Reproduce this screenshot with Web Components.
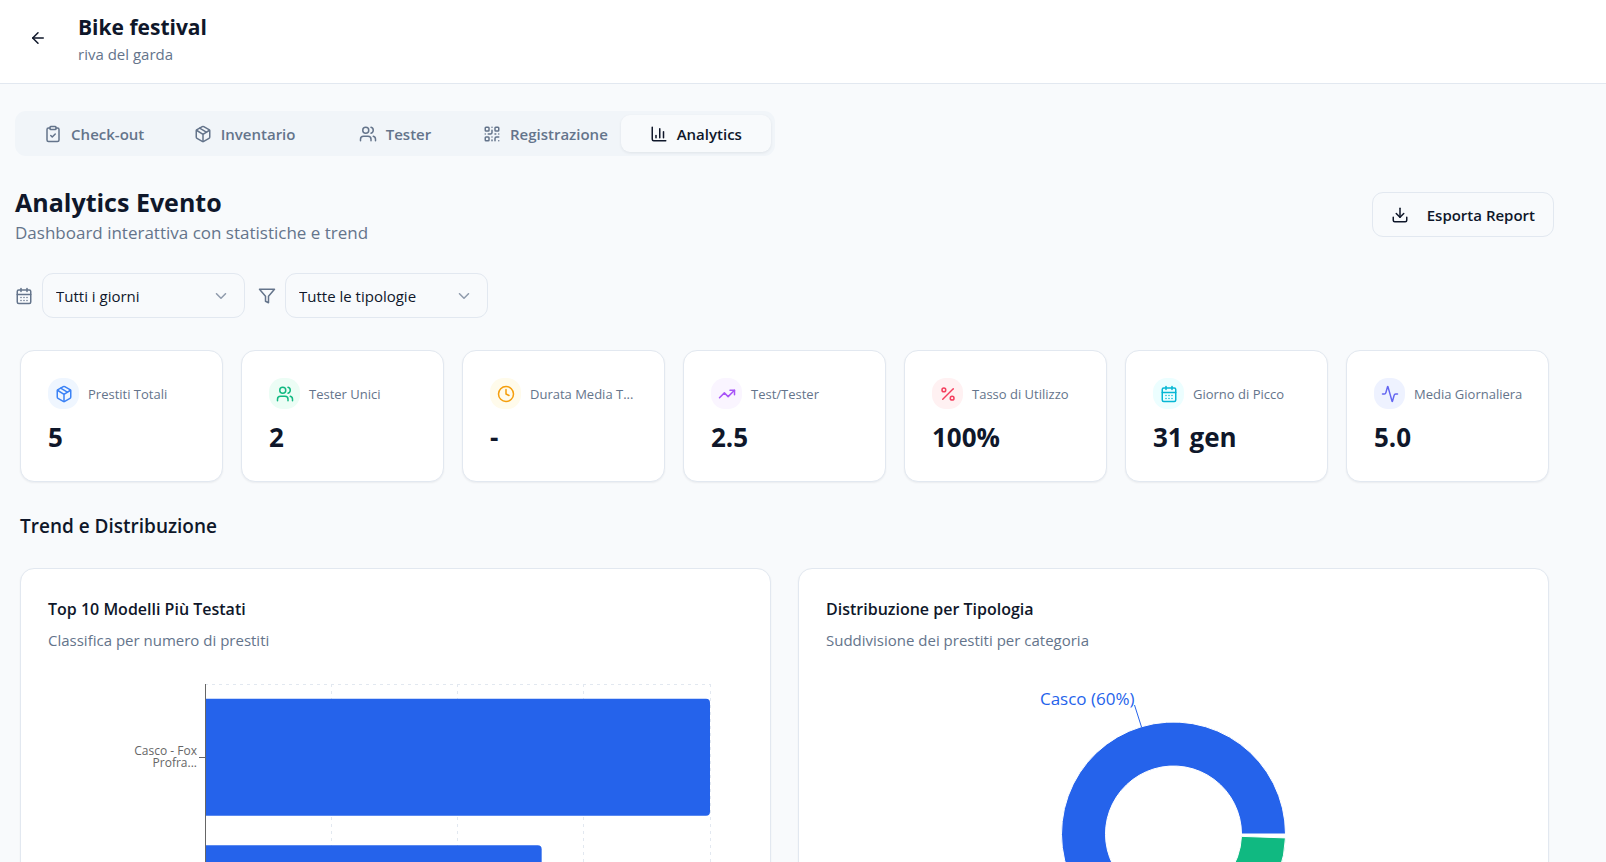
<!DOCTYPE html>
<html lang="it">
    <head>
        <meta charset="UTF-8" />
        <meta name="viewport" content="width=device-width, initial-scale=1.0" />
        <title>Bike festival - Analytics</title>
        <style>
            :root {
                --background: #f8fafc;
                --foreground: #0f172a;
                --muted: #f1f5f9;
                --muted-foreground: #64748b;
                --border: #e2e8f0;
                --card: #fff;
                --primary: #2563eb;
                --success: #10b981;
            }
            body {
                margin: 0;
                background: var(--background);
                color: var(--foreground);
                font: 15px/24px 'Open Sans', 'Noto Sans', sans-serif;
            }
        </style>
    </head>
    <body>
        <event-header heading="Bike festival" place="riva del garda"></event-header>
        <event-analytics></event-analytics>

        <script>
            const ICONS = {
                back: '<path d="m12 19-7-7 7-7"/><path d="M19 12H5"/>',
                clipboard:
                    '<rect width="8" height="4" x="8" y="2" rx="1" ry="1"/><path d="M16 4h2a2 2 0 0 1 2 2v14a2 2 0 0 1-2 2H6a2 2 0 0 1-2-2V6a2 2 0 0 1 2-2h2"/><path d="m9 14 2 2 4-4"/>',
                package:
                    '<path d="M11 21.73a2 2 0 0 0 2 0l7-4A2 2 0 0 0 21 16V8a2 2 0 0 0-1-1.73l-7-4a2 2 0 0 0-2 0l-7 4A2 2 0 0 0 3 8v8a2 2 0 0 0 1 1.73z"/><path d="M12 22V12"/><path d="m3.3 7 7.703 4.734a2 2 0 0 0 1.994 0L20.7 7"/><path d="m7.5 4.27 9 5.15"/>',
                users: '<path d="M16 21v-2a4 4 0 0 0-4-4H6a4 4 0 0 0-4 4v2"/><circle cx="9" cy="7" r="4"/><path d="M22 21v-2a4 4 0 0 0-3-3.87"/><path d="M16 3.13a4 4 0 0 1 0 7.75"/>',
                qr: '<rect width="5" height="5" x="3" y="3" rx="1"/><rect width="5" height="5" x="16" y="3" rx="1"/><rect width="5" height="5" x="3" y="16" rx="1"/><path d="M21 16h-3a2 2 0 0 0-2 2v3"/><path d="M21 21v.01"/><path d="M12 7v3a2 2 0 0 1-2 2H7"/><path d="M3 12h.01"/><path d="M12 3h.01"/><path d="M12 16v.01"/><path d="M16 12h1"/><path d="M21 12v.01"/><path d="M12 21v-1"/>',
                chart: '<path d="M3 3v16a2 2 0 0 0 2 2h16"/><path d="M18 17V9"/><path d="M13 17V5"/><path d="M8 17v-3"/>',
                download:
                    '<path d="M21 15v4a2 2 0 0 1-2 2H5a2 2 0 0 1-2-2v-4"/><path d="m7 10 5 5 5-5"/><path d="M12 15V3"/>',
                calendar:
                    '<path d="M8 2v4"/><path d="M16 2v4"/><rect width="18" height="18" x="3" y="4" rx="2"/><path d="M3 10h18"/><path d="M8 14h.01"/><path d="M12 14h.01"/><path d="M16 14h.01"/><path d="M8 18h.01"/><path d="M12 18h.01"/><path d="M16 18h.01"/>',
                filter: '<path d="M22 3H2l8 9.46V19l4 2v-8.54z"/>',
                chevron: '<path d="m6 9 6 6 6-6"/>',
                clock: '<circle cx="12" cy="12" r="10"/><path d="M12 6v6l4 2"/>',
                trending: '<path d="m22 7-8.5 8.5-5-5L2 17"/><path d="M16 7h6v6"/>',
                percent:
                    '<path d="M19 5 5 19"/><circle cx="6.5" cy="6.5" r="2.5"/><circle cx="17.5" cy="17.5" r="2.5"/>',
                activity:
                    '<path d="M22 12h-2.48a2 2 0 0 0-1.93 1.46l-2.35 8.36a.25.25 0 0 1-.48 0L9.24 2.18a.25.25 0 0 0-.48 0l-2.35 8.36A2 2 0 0 1 4.49 12H2"/>',
            }

            class BaseElement extends HTMLElement {
                constructor() {
                    super()
                    this.attachShadow({ mode: 'open' })
                }

                connectedCallback() {
                    this.shadowRoot.innerHTML = this.render()
                }
            }

            class AppIcon extends BaseElement {
                render() {
                    return `
                    <style>
                        :host { display: block; flex: none; width: 18px; height: 18px; }
                        svg { display: block; width: 100%; height: 100%; }
                    </style>
                    <svg viewBox="0 0 24 24" fill="none" stroke="currentColor" stroke-width="2"
                        stroke-linecap="round" stroke-linejoin="round" aria-hidden="true">
                        ${ICONS[this.getAttribute('name')]}
                    </svg>`
                }
            }

            class EventHeader extends BaseElement {
                render() {
                    return `
                    <style>
                        :host { display: block; background: var(--card); border-bottom: 1px solid var(--border); }
                        header { display: flex; gap: 18px; padding: 15px; }
                        button {
                            display: flex; align-items: center; justify-content: center;
                            width: 45px; height: 45px; padding: 0;
                            border: 0; border-radius: 11px; background: none; color: inherit;
                        }
                        h1 { margin: 0; font-size: 21px; line-height: 25px; font-weight: 700; }
                        p { margin: 0; line-height: 28px; color: var(--muted-foreground); }
                    </style>
                    <header>
                        <button type="button" aria-label="Indietro"><app-icon name="back"></app-icon></button>
                        <div>
                            <h1>${this.getAttribute('heading')}</h1>
                            <p>${this.getAttribute('place')}</p>
                        </div>
                    </header>`
                }
            }

            class TabBar extends BaseElement {
                render() {
                    return `
                    <style>
                        :host {
                            display: grid; grid-auto-flow: column; grid-auto-columns: 1fr;
                            box-sizing: border-box; max-width: 760px; padding: 4px;
                            border-radius: 11px; background: var(--muted);
                        }
                    </style>
                    <slot></slot>`
                }
            }

            class TabItem extends BaseElement {
                render() {
                    const active = this.hasAttribute('active')
                    return `
                    <style>
                        :host { display: block; min-width: 0; }
                        button {
                            display: flex; align-items: center; justify-content: center; gap: 9px;
                            width: 100%; height: 37px; padding: 0; border: 0; border-radius: 9px;
                            background: none; color: var(--muted-foreground);
                            font: inherit; font-weight: 600; white-space: nowrap;
                        }
                        button[aria-selected='true'] {
                            background: var(--background); color: var(--foreground);
                            box-shadow: 0 1px 3px rgb(15 23 42 / 0.08);
                        }
                    </style>
                    <button type="button" role="tab" aria-selected="${active}">
                        <app-icon name="${this.getAttribute('icon')}"></app-icon>
                        <slot></slot>
                    </button>`
                }
            }

            class FilterSelect extends BaseElement {
                render() {
                    return `
                    <style>
                        :host { display: flex; align-items: center; gap: 9px; color: var(--muted-foreground); }
                        label { display: block; }
                        .box { display: grid; align-items: center; width: 203px; }
                        .box > * { grid-area: 1 / 1; }
                        .box app-icon { justify-self: end; margin-right: 15px; opacity: 0.7; pointer-events: none; }
                        select {
                            appearance: none; box-sizing: border-box; width: 100%; height: 45px;
                            padding: 0 13px; border: 1px solid var(--border); border-radius: 11px;
                            background: var(--background); color: var(--foreground); font: inherit;
                        }
                    </style>
                    <label for="field"><app-icon name="${this.getAttribute('icon')}"></app-icon></label>
                    <div class="box">
                        <select id="field" aria-label="${this.getAttribute('label')}">
                            <option>${this.getAttribute('value')}</option>
                        </select>
                        <app-icon name="chevron"></app-icon>
                    </div>`
                }
            }

            class StatCard extends BaseElement {
                render() {
                    return `
                    <style>
                        :host {
                            display: block; box-sizing: border-box; min-width: 0; padding: 27px;
                            border: 1px solid var(--border); border-radius: 14px; background: var(--card);
                            box-shadow: 0 1px 2px rgb(15 23 42 / 0.06);
                        }
                        .top { display: flex; align-items: center; gap: 9px; margin-bottom: 12px; }
                        .badge {
                            display: grid; place-items: center; flex: none; width: 31px; height: 31px;
                            border-radius: 14px; color: var(--tone); background: var(--tint);
                        }
                        .label { font-size: 13px; color: var(--muted-foreground); white-space: nowrap; }
                        .value { font-size: 26px; line-height: 33px; font-weight: 700; }
                    </style>
                    <div class="top">
                        <span class="badge"><app-icon name="${this.getAttribute('icon')}"></app-icon></span>
                        <span class="label">${this.getAttribute('label')}</span>
                    </div>
                    <div class="value"><slot></slot></div>`
                }
            }

            class ChartCard extends BaseElement {
                render() {
                    return `
                    <style>
                        :host {
                            display: block; box-sizing: border-box; min-width: 0; padding: 27px;
                            border: 1px solid var(--border); border-radius: 14px; background: var(--card);
                            box-shadow: 0 1px 2px rgb(15 23 42 / 0.06);
                        }
                        h3 { margin: 0 0 4px; font-size: 16px; line-height: 27px; font-weight: 600; }
                        p { margin: 0 0 26px; line-height: 26px; color: var(--muted-foreground); }
                    </style>
                    <h3>${this.getAttribute('heading')}</h3>
                    <p>${this.getAttribute('description')}</p>
                    <slot></slot>`
                }
            }

            class BarChart extends BaseElement {
                render() {
                    const grid = [25, 50, 75, 100]
                        .map((x) => `<line class="grid" x1="${x}%" x2="${x}%" y1="0" y2="100%"/>`)
                        .join('')
                    return `
                    <style>
                        :host { display: flex; padding: 5px 33px 37px 0; height: 293px; }
                        .axis { display: flex; flex-direction: column; width: 157px; flex: none; }
                        .tick {
                            flex: 1; display: flex; align-items: center; justify-content: flex-end; gap: 2px;
                            font-size: 12px; line-height: 12px; text-align: right; color: #666;
                        }
                        .tick span { max-width: 80px; }
                        .tick i { width: 6px; height: 1px; background: #666; }
                        svg { flex: 1; min-width: 0; height: 100%; overflow: visible; }
                        .grid { stroke: var(--border); stroke-dasharray: 3 4; shape-rendering: crispEdges; }
                        .line { stroke: #666; shape-rendering: crispEdges; }
                        .bars { overflow: hidden; }
                        .bars rect { x: -4px; height: 40%; fill: var(--primary); }
                    </style>
                    <div class="axis">
                        <div class="tick"><span>Casco - Fox Profra...</span><i></i></div>
                        <div class="tick"></div>
                    </div>
                    <svg>
                        <line class="grid" x1="0" x2="100%" y1="0" y2="0"/>
                        ${grid}
                        <svg class="bars" width="100%" height="100%">
                            <rect y="5%" rx="4" style="width: calc(100% + 4px)"/>
                            <rect y="55%" rx="4" style="width: calc(66.667% + 4px)"/>
                        </svg>
                        <line class="line" x1="0" x2="0" y1="0" y2="100%"/>
                    </svg>`
                }
            }

            class DonutChart extends BaseElement {
                // angles in degrees, counterclockwise from three o'clock
                point(radius, angle) {
                    const a = (angle * Math.PI) / 180
                    return `${(radius * Math.cos(a)).toFixed(2)} ${(-radius * Math.sin(a)).toFixed(2)}`
                }

                slice(from, to) {
                    const [outer, inner] = [112, 68]
                    const large = to - from > 180 ? 1 : 0
                    return `M${this.point(outer, from)}A${outer} ${outer} 0 ${large} 0 ${this.point(outer, to)}
                        L${this.point(inner, to)}A${inner} ${inner} 0 ${large} 1 ${this.point(inner, from)}Z`
                }

                render() {
                    return `
                    <style>
                        :host { display: block; }
                        svg { display: block; width: 100%; height: 335px; overflow: visible; }
                        path { stroke: #fff; }
                        text { font-size: 17px; fill: var(--primary); }
                        line { stroke: var(--primary); }
                    </style>
                    <svg>
                        <svg x="50%" y="155" overflow="visible">
                            <path d="${this.slice(0, 213.6)}" fill="var(--primary)"/>
                            <path d="${this.slice(215.6, 358)}" fill="var(--success)"/>
                            <line x1="-32" y1="-107" x2="-39" y2="-129"/>
                            <text x="-39" y="-129" text-anchor="end">Casco (60%)</text>
                        </svg>
                    </svg>`
                }
            }

            class EventAnalytics extends BaseElement {
                render() {
                    const stats = [
                        ['package', 'Prestiti Totali', '5', '#3b82f6', '#eff6ff'],
                        ['users', 'Tester Unici', '2', '#10b981', '#ecfdf5'],
                        ['clock', 'Durata Media T...', '-', '#f59e0b', '#fffbeb'],
                        ['trending', 'Test/Tester', '2.5', '#a855f7', '#faf5ff'],
                        ['percent', 'Tasso di Utilizzo', '100%', '#f43f5e', '#fff1f2'],
                        ['calendar', 'Giorno di Picco', '31 gen', '#06b6d4', '#ecfeff'],
                        ['activity', 'Media Giornaliera', '5.0', '#6366f1', '#eef2ff'],
                    ]
                    const cards = stats
                        .map(
                            ([icon, label, value, tone, tint]) =>
                                `<stat-card icon="${icon}" label="${label}" style="--tone: ${tone}; --tint: ${tint}">${value}</stat-card>`
                        )
                        .join('')
                    return `
                    <style>
                        :host { display: block; padding: 27px 52px 27px 15px; }
                        .title { display: flex; align-items: center; justify-content: space-between; margin: 28px 0; }
                        h2 { margin: 0; font-size: 25px; line-height: 37px; font-weight: 700; }
                        .title p { margin: 0; font-size: 17px; line-height: 24px; color: var(--muted-foreground); }
                        .export {
                            display: flex; align-items: center; gap: 18px; height: 45px; padding: 0 18px;
                            border: 1px solid var(--border); border-radius: 11px;
                            background: var(--background); color: inherit; font: inherit; font-weight: 600;
                        }
                        .filters { display: flex; flex-wrap: wrap; gap: 13px; margin-bottom: 32px; }
                        .stats, .charts { display: grid; padding: 0 5px; }
                        .stats { grid-template-columns: repeat(7, 1fr); gap: 18px; }
                        .charts { grid-template-columns: repeat(2, 1fr); gap: 27px; }
                        .section { margin: 29px 5px 27px; font-size: 19px; line-height: 30px; font-weight: 600; }
                        @media (max-width: 1200px) {
                            .stats { grid-template-columns: repeat(auto-fill, minmax(200px, 1fr)); }
                            .charts { grid-template-columns: 1fr; }
                        }
                    </style>
                    <main>
                        <tab-bar role="tablist">
                            <tab-item icon="clipboard">Check-out</tab-item>
                            <tab-item icon="package">Inventario</tab-item>
                            <tab-item icon="users">Tester</tab-item>
                            <tab-item icon="qr">Registrazione</tab-item>
                            <tab-item icon="chart" active>Analytics</tab-item>
                        </tab-bar>
                        <div class="title">
                            <div>
                                <h2>Analytics Evento</h2>
                                <p>Dashboard interattiva con statistiche e trend</p>
                            </div>
                            <button type="button" class="export">
                                <app-icon name="download"></app-icon>Esporta Report
                            </button>
                        </div>
                        <div class="filters">
                            <filter-select icon="calendar" label="Giorno" value="Tutti i giorni"></filter-select>
                            <filter-select icon="filter" label="Tipologia" value="Tutte le tipologie"></filter-select>
                        </div>
                        <div class="stats">${cards}</div>
                        <h2 class="section">Trend e Distribuzione</h2>
                        <div class="charts">
                            <chart-card heading="Top 10 Modelli Più Testati" description="Classifica per numero di prestiti">
                                <bar-chart></bar-chart>
                            </chart-card>
                            <chart-card heading="Distribuzione per Tipologia" description="Suddivisione dei prestiti per categoria">
                                <donut-chart></donut-chart>
                            </chart-card>
                        </div>
                    </main>`
                }
            }

            customElements.define('app-icon', AppIcon)
            customElements.define('event-header', EventHeader)
            customElements.define('tab-bar', TabBar)
            customElements.define('tab-item', TabItem)
            customElements.define('filter-select', FilterSelect)
            customElements.define('stat-card', StatCard)
            customElements.define('chart-card', ChartCard)
            customElements.define('bar-chart', BarChart)
            customElements.define('donut-chart', DonutChart)
            customElements.define('event-analytics', EventAnalytics)
        </script>
    </body>
</html>
